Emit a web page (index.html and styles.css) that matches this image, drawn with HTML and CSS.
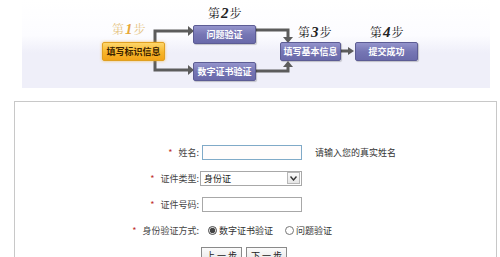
FILE: index.html
```html
<!DOCTYPE html>
<html lang="zh-CN">
<head>
  <meta charset="UTF-8" />
  <title>身份验证 | 填写标识信息</title>
  <link rel="stylesheet" href="styles.css">
</head>
<body>
  <!-- 步骤流程图 -->
  <div class="steps">
    <svg class="lines" width="468" height="88" viewBox="0 0 468 88">
      <g fill="none" stroke="#5c5c5c" stroke-width="3">
        <path d="M133 43 V31 H167" />
        <path d="M133 60 V70 H167" />
        <path d="M234 30 H266 V38" />
        <path d="M234 71 H266 V66" />
        <path d="M319 51 H327" />
      </g>
      <g fill="#5c5c5c">
        <path d="M166 26 L172 31 L166 36 Z" />
        <path d="M166 65 L172 70 L166 75 Z" />
        <path d="M261 37 L266 43 L271 37 Z" />
        <path d="M261 67 L266 61 L271 67 Z" />
        <path d="M326 47 L332 51 L326 55 Z" />
      </g>
    </svg>

    <span class="step-no s1">第<b>1</b>步</span>
    <span class="step-no s2">第<b>2</b>步</span>
    <span class="step-no s3">第<b>3</b>步</span>
    <span class="step-no s4">第<b>4</b>步</span>

    <div class="node current n1">填写标识信息</div>
    <div class="node n2a">问题验证</div>
    <div class="node n2b">数字证书验证</div>
    <div class="node n3">填写基本信息</div>
    <div class="node n4">提交成功</div>
  </div>

  <!-- 表单 -->
  <div class="form-box">
    <div class="form-grid">
      <label class="label"><i>*</i> 姓名:</label>
      <div class="field"><input class="text pink" type="text"></div>
      <span class="hint">请输入您的真实姓名</span>

      <label class="label"><i>*</i> 证件类型:</label>
      <div class="field select-wrap">
        <select class="select"><option>身份证</option></select>
        <span class="select-arrow">
          <svg width="7" height="5" viewBox="0 0 7 5"><path d="M0.5 0.5 L3.5 4 L6.5 0.5" fill="none" stroke="#333" stroke-width="1.4"/></svg>
        </span>
      </div>
      <span></span>

      <label class="label"><i>*</i> 证件号码:</label>
      <div class="field"><input class="text" type="text"></div>
      <span></span>

      <label class="label"><i>*</i> 身份验证方式:</label>
      <div class="field radios">
        <label class="radio"><input type="radio" name="way" checked> 数字证书验证</label>
        <label class="radio"><input type="radio" name="way"> 问题验证</label>
      </div>
      <span></span>
    </div>

    <div class="buttons">
      <button class="btn">上 一 步</button>
      <button class="btn">下 一 步</button>
    </div>
  </div>
</body>
</html>
```

FILE: styles.css
```css
/* Reset */
*, *::before, *::after {
  box-sizing: border-box;
}
body {
  margin: 0;
  background: #fff;
  font-family: "Noto Sans CJK SC", "Liberation Sans", sans-serif;
  color: #333;
  font-size: 9px;
  overflow: hidden;
}

/* 步骤流程图 */
.steps {
  position: relative;
  margin-left: 22px;
  width: 468px;
  height: 88px;
  background: linear-gradient(to bottom, #ffffff 0%, #fcfcff 40%, #efeff9 60%, #efeff9 100%);
}
.lines {
  position: absolute;
  left: 0;
  top: 0;
}
.step-no {
  position: absolute;
  font-family: "Noto Serif CJK SC", "Noto Sans CJK SC", serif;
  font-size: 12px;
  line-height: 14px;
  color: #222;
}
.step-no b {
  font-family: "Liberation Serif", serif;
  font-style: italic;
  font-size: 15px;
  font-weight: bold;
  margin: 0 1px;
}
.s1 { left: 90px; top: 22px; color: #e6c585; }
.s1 b { color: #e8a838; }
.s2 { left: 186px; top: 6px; }
.s3 { left: 276px; top: 25px; }
.s4 { left: 348px; top: 25px; }

.node {
  position: absolute;
  height: 19px;
  line-height: 17px;
  text-align: center;
  font-size: 9px;
  font-weight: bold;
  color: #fff;
  border: 1px solid #5c5c94;
  border-radius: 2px;
  background: linear-gradient(to bottom, #9494cc 0%, #7676b4 50%, #6a6aaa 100%);
  box-shadow: 1px 1px 1px rgba(0, 0, 0, 0.2);
}
.node.current {
  color: #3a2200;
  border-color: #e0a020;
  background: linear-gradient(to bottom, #fdd66a 0%, #f7b52a 55%, #f3a418 100%);
  box-shadow: 0 0 3px rgba(240, 170, 40, 0.7);
}
.n1  { left: 80px;  top: 42px; width: 63px; }
.n2a { left: 171px; top: 25px; width: 63px; }
.n2b { left: 171px; top: 62px; width: 63px; }
.n3  { left: 258px; top: 42px; width: 61px; }
.n4  { left: 333px; top: 42px; width: 63px; }

/* 表单 */
.form-box {
  margin: 13px 3px 0 14px;
  height: 200px;
  border: 1px solid #c8c8c8;
  border-bottom: none;
  padding-top: 37px;
}
.form-grid {
  display: grid;
  grid-template-columns: 185px 114px auto;
  grid-auto-rows: 26px;
  align-items: center;
}
.label {
  text-align: right;
  color: #444;
  padding-right: 1px;
}
.label i {
  font-style: normal;
  color: #c03030;
  margin-right: 4px;
}
.field {
  display: flex;
  align-items: center;
}
.text {
  width: 100px;
  height: 15px;
  margin-left: 2px;
  border: 1px solid #a8a8a8;
  background: #fff;
  padding: 0 2px;
  font-size: 9px;
}
.text.pink {
  border-color: #80aac8;
  background: #fffcfc;
}
.hint {
  color: #333;
  padding-left: 1px;
}
.select-wrap {
  position: relative;
  width: 102px;
}
.select {
  appearance: none;
  width: 102px;
  height: 15px;
  border: 1px solid #a8a8a8;
  border-radius: 0;
  background: #fff;
  font-family: inherit;
  font-size: 9px;
  color: #222;
  padding: 0 3px;
  line-height: 13px;
}
.select-arrow {
  position: absolute;
  right: 2px;
  top: 50%;
  margin-top: -6px;
  width: 13px;
  height: 12px;
  border: 1px solid #b8b8b8;
  background: linear-gradient(to bottom, #fafafa, #e6e6e6);
  display: flex;
  align-items: center;
  justify-content: center;
}
.radios {
  gap: 12px;
  white-space: nowrap;
  padding-left: 8px;
}
.radio {
  display: flex;
  align-items: center;
  color: #333;
}
.radio input {
  width: 9px;
  height: 9px;
  margin: 0 2px 0 0;
  accent-color: #444;
}
.buttons {
  display: flex;
  gap: 4px;
  padding-left: 186px;
  margin-top: 4px;
}
.btn {
  width: 41px;
  height: 18px;
  border: 1px solid #8a8a8a;
  border-radius: 0;
  background: linear-gradient(to bottom, #fbfbfb, #e4e4e4);
  font-family: inherit;
  font-size: 9px;
  line-height: 12px;
  color: #222;
  padding: 0;
  vertical-align: top;
}
```
